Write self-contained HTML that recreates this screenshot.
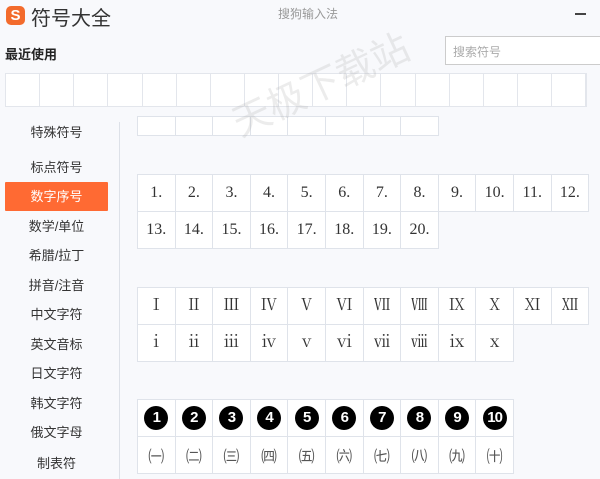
<!DOCTYPE html><html><head><meta charset="utf-8"><style>
*{margin:0;padding:0;box-sizing:border-box}
body{width:600px;height:479px;overflow:hidden;background:#f8f9fc;font-family:"Liberation Sans","Noto Sans CJK SC",sans-serif;position:relative}
.a{position:absolute}
.cell{position:absolute;width:38.5px;height:38px;border:1px solid #dfe3ea;background:#fff;text-align:center;line-height:36px;font-family:"Liberation Serif","Noto Serif CJK SC",serif;font-size:16px;color:#333}
.side div{position:absolute;left:5px;width:103px;text-align:center;font-size:13px;color:#333;height:29px;line-height:29px}
.c{display:inline-block;width:24px;height:24px;border-radius:50%;background:#000;color:#fff;font-family:"Liberation Sans",sans-serif;font-weight:bold;font-size:15px;line-height:24px;text-align:center;letter-spacing:-1px;vertical-align:middle}
.ch{font-family:"Noto Sans CJK SC",sans-serif;font-size:16px;color:#555}
</style></head><body>
<div class="a" style="left:6px;top:6px;width:19px;height:19px;background:#f36b2c;border-radius:5px;color:#fff;font-weight:bold;font-size:15px;line-height:19px;text-align:center">S</div>
<div class="a" style="left:31px;top:2px;font-size:20px;color:#333">符号大全</div>
<div class="a" style="left:278px;top:5px;font-size:12px;color:#999">搜狗输入法</div>
<div class="a" style="left:575px;top:13px;width:11px;height:2px;background:#444"></div>
<div class="a" style="left:5px;top:44px;font-size:13px;font-weight:bold;color:#222">最近使用</div>
<div class="a" style="left:445px;top:36px;width:160px;height:29px;border:1px solid #ccc;background:#fff;font-size:12px;color:#aaa;padding:6px 7px">搜索符号</div>
<div class="a" style="left:5px;top:73px;width:582px;height:34px;background:#fff;border:1px solid #e3e6ec;display:flex">
<script>document.write(Array(17).fill('<div style="flex:1;border-right:1px solid #e3e6ec"></div>').join(''))</script></div>
<div class="a" style="left:119px;top:122px;width:1px;height:357px;background:#dde1e8"></div>
<div class="side">
<div style="top:118px">特殊符号</div><div style="top:153px">标点符号</div>
<div style="top:182px;background:#ff6a33;color:#fff;border-radius:1px">数字序号</div>
<div style="top:212px">数学/单位</div><div style="top:241px">希腊/拉丁</div><div style="top:271px">拼音/注音</div>
<div style="top:300px">中文字符</div><div style="top:330px">英文音标</div><div style="top:359px">日文字符</div>
<div style="top:389px">韩文字符</div><div style="top:418px">俄文字母</div><div style="top:449px">制表符</div>
</div>
<div id="g"></div>
<div class="a" style="left:245px;top:92px;font-size:38px;color:rgba(170,170,170,0.22);transform:rotate(-25deg);transform-origin:left bottom;white-space:nowrap">天极下载站</div>
<script>
var h='';
function row(y,arr,cls,hh){arr.forEach(function(t,i){h+='<div class="cell '+(cls||'')+'" style="left:'+(137+i*37.6)+'px;top:'+y+'px'+(hh?';height:'+hh+'px':'')+'">'+t+'</div>';});}
row(116,['','','','','','','',''],'',20);
row(174,['1.','2.','3.','4.','5.','6.','7.','8.','9.','10.','11.','12.']);
row(211,['13.','14.','15.','16.','17.','18.','19.','20.']);
row(287,['Ⅰ','Ⅱ','Ⅲ','Ⅳ','Ⅴ','Ⅵ','Ⅶ','Ⅷ','Ⅸ','Ⅹ','Ⅺ','Ⅻ']);
row(324,['ⅰ','ⅱ','ⅲ','ⅳ','ⅴ','ⅵ','ⅶ','ⅷ','ⅸ','ⅹ']);
row(399,[1,2,3,4,5,6,7,8,9,10].map(function(n){return '<span class="c">'+n+'</span>'}));
row(436,['㈠','㈡','㈢','㈣','㈤','㈥','㈦','㈧','㈨','㈩'],'ch');
document.getElementById('g').innerHTML=h;
</script>
</body></html>
